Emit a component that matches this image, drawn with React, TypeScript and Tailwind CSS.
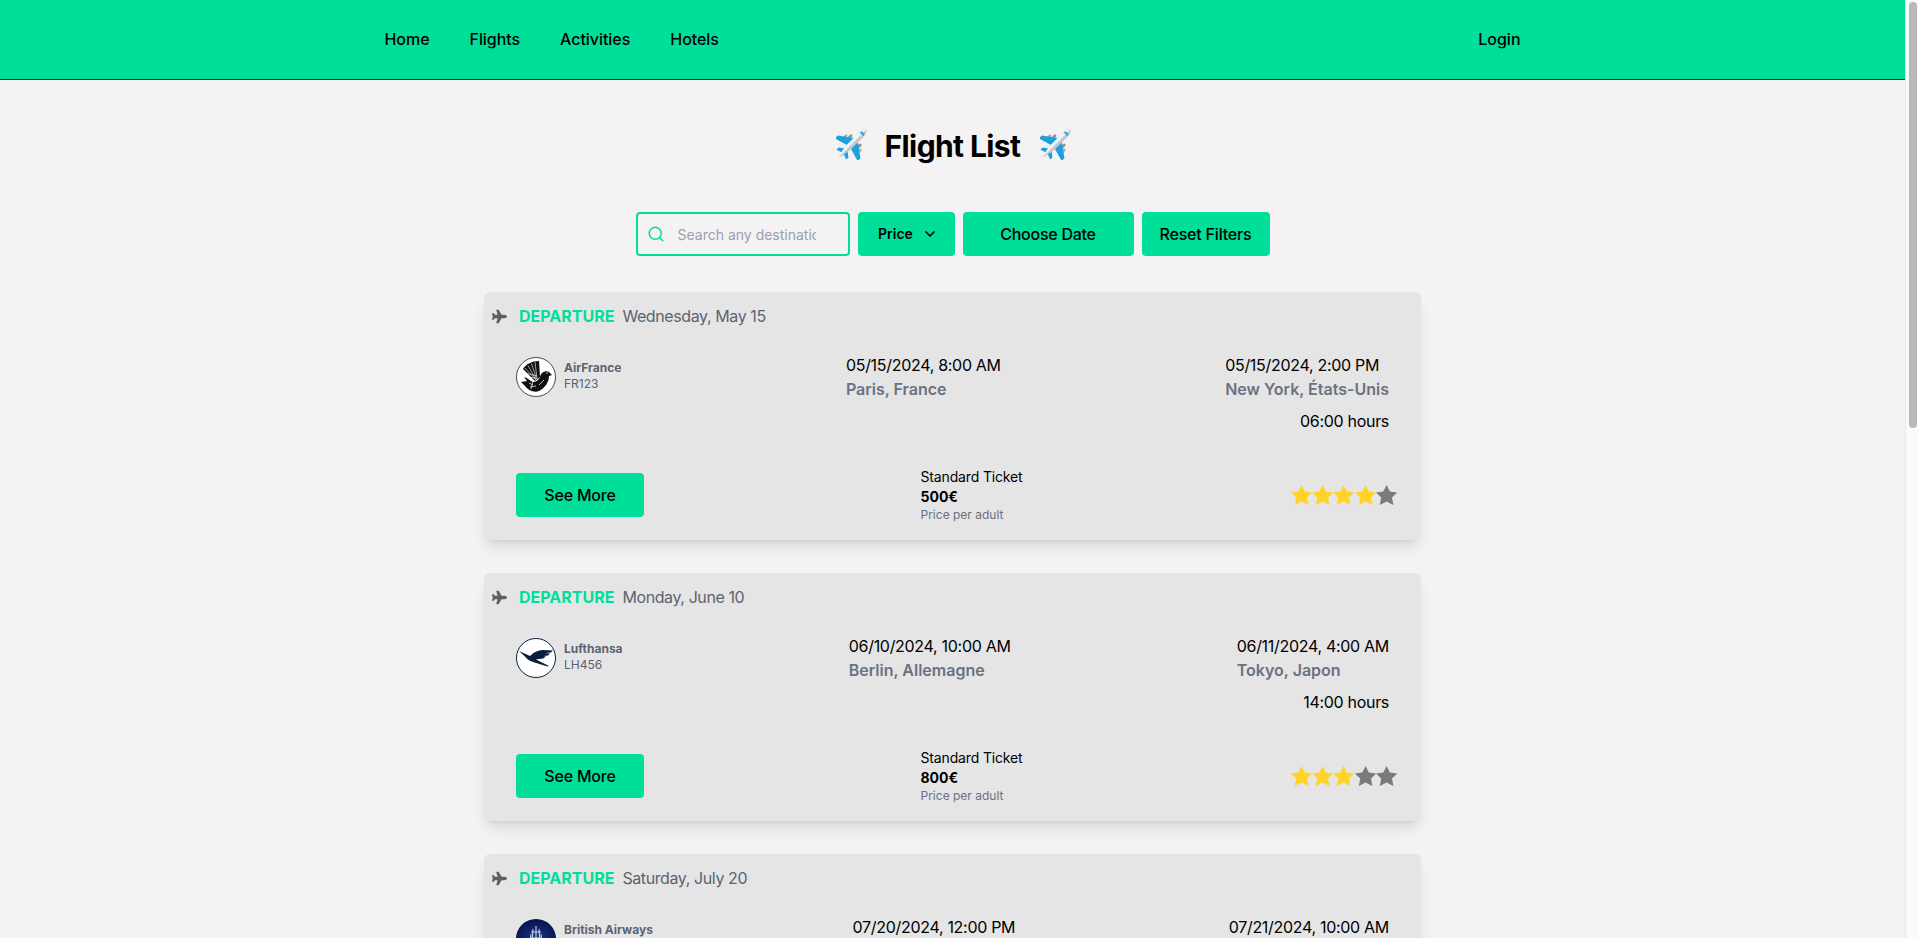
import { FaPlane } from "react-icons/fa";
import { ChevronDown, Search } from "lucide-react";

type Flight = {
  date: string,
  airline: string,
  code: string,
  logo: "af" | "lh" | "ba",
  depTime: string,
  depCity: string,
  arrTime: string,
  arrCity: string,
  duration: string,
  price: string,
  stars: number,
}

const flights: Flight[] = [
  { date: "Wednesday, May 15", airline: "AirFrance", code: "FR123", logo: "af", depTime: "05/15/2024, 8:00 AM", depCity: "Paris, France", arrTime: "05/15/2024, 2:00 PM", arrCity: "New York, États-Unis", duration: "06:00 hours", price: "500€", stars: 4 },
  { date: "Monday, June 10", airline: "Lufthansa", code: "LH456", logo: "lh", depTime: "06/10/2024, 10:00 AM", depCity: "Berlin, Allemagne", arrTime: "06/11/2024, 4:00 AM", arrCity: "Tokyo, Japon", duration: "14:00 hours", price: "800€", stars: 3 },
  { date: "Saturday, July 20", airline: "British Airways", code: "BA789", logo: "ba", depTime: "07/20/2024, 12:00 PM", depCity: "Londres, Royaume-Uni", arrTime: "07/21/2024, 10:00 AM", arrCity: "Sydney, Australie", duration: "22:00 hours", price: "1200€", stars: 5 },
]

const PlaneEmoji = ({ className }: { className: string }) => (
  <svg width="32" height="32" viewBox="0 0 32 32" className={className}>
    <g transform="rotate(45 16 16)">
      <rect x="8" y="9.5" width="3" height="6" rx="1.4" fill="#8d9499" />
      <rect x="21" y="9.5" width="3" height="6" rx="1.4" fill="#8d9499" />
      <rect x="4.6" y="13" width="2.6" height="5" rx="1.2" fill="#a5abaf" />
      <rect x="24.8" y="13" width="2.6" height="5" rx="1.2" fill="#a5abaf" />
      <path d="M14 10 L0 20 L0 24 L14 20 Z" fill="#1f9fdc" />
      <path d="M18 10 L32 20 L32 24 L18 20 Z" fill="#1f9fdc" />
      <path d="M14.5 24 L9 28 L9 31 L15 29 Z" fill="#1f9fdc" />
      <path d="M17.5 24 L23 28 L23 31 L17 29 Z" fill="#1f9fdc" />
      <path d="M16 -4 C18.4 -4 19 1 19 4 L19 22 L16.8 34 L15.2 34 L13 22 L13 4 C13 1 13.6 -4 16 -4 Z" fill="#c4c8cb" />
      <path d="M16 -4 C13.6 -4 13 1 13 4 L13 22 L15.2 34 L16 34 Z" fill="#f3f4f5" />
      <path d="M13.8 0 L18.2 0 L18.6 2.5 L13.4 2.5 Z" fill="#37a6df" />
    </g>
  </svg>
)

const AirlineLogo = ({ logo }: { logo: Flight["logo"] }) => {
  if (logo === "af") {
    return (
      <svg width="40" height="40" viewBox="0 0 40 40" className="shrink-0">
        <circle cx="20" cy="20" r="19.5" fill="#fff" stroke="#4a4a4a" strokeWidth="1" />
        <path d="M7 12 C10 7 16 4 23 4 L24 20 L19 24 Z" fill="#111" />
        <path d="M20 23 L9 11 M20 23 L12 8.5 M20.5 22 L15.5 6.5 M21 22 L19 5 M9 16 L21 19 M11 20 L20 21" stroke="#fff" strokeWidth="0.6" />
        <path d="M24 20 C25 15 30 13 33 15 L36 18 L33 19 C33 25 29 31 23 34 C18 36 12 33 9 29 L5 25 L11 24 L8 20 C12 21 14 24 17 25 C20 25 23 23 24 20 Z" fill="#111" />
        <path d="M13 26 L17 28 M14 30 L20 29 M23 28 L28 23 M17 24 L15 32" stroke="#fff" strokeWidth="0.7" />
        <circle cx="31" cy="16" r="0.7" fill="#fff" />
      </svg>
    )
  }
  if (logo === "lh") {
    return (
      <svg width="40" height="40" viewBox="0 0 40 40" className="shrink-0">
        <circle cx="20" cy="20" r="19.5" fill="#fff" stroke="#0a1d3f" strokeWidth="1" />
        <path d="M3 13 L14 18 C17 15 21 12.5 26 12 L37 12.5 L35 14.5 L29 15 L34 15.5 L32 17.5 L27.5 18 L30 18.5 L27 20.5 C24 21 21.5 21 20 21.5 L33 28 L31.5 28.5 L17 24 C13 23 11 21 9 18.5 Z" fill="#0a1d3f" />
      </svg>
    )
  }
  return (
    <svg width="40" height="40" viewBox="0 0 40 40" className="shrink-0">
      <defs>
        <radialGradient id="ba-glow" cx="50%" cy="55%" r="55%">
          <stop offset="0%" stopColor="#1c3a8c" />
          <stop offset="100%" stopColor="#081450" />
        </radialGradient>
      </defs>
      <circle cx="20" cy="20" r="20" fill="url(#ba-glow)" />
      <path d="M20 7 L20 24 M17 10 L16 24 M23 10 L24 24 M15 15 L14 24 M25 15 L26 24 M14 19 L26 19 M15 13 L25 13" stroke="#c9d3ee" strokeWidth="1.1" fill="none" />
    </svg>
  )
}

const Star = ({ on }: { on: boolean }) => (
  <svg width="21.2" height="20" viewBox="0 0 21.2 20" className={on ? "shrink-0 text-[#ffd42a]" : "shrink-0 text-[#7a7a7a]"}>
    <polygon points="10.6,0 13.9,6.6 21.2,7.5 16,12.6 17.4,20 10.6,16.6 3.8,20 5.2,12.6 0,7.5 7.3,6.6" fill="currentColor" />
  </svg>
)

const FlightCard = ({ flight }: { flight: Flight }) => (
  <div className="h-[248px] shrink-0 rounded-md bg-[#e5e5e5] shadow-lg">
    <div className="flex items-center pl-2 pt-3">
      <FaPlane className="text-[15px] text-[#5f5f5f]" />
      <span className="ml-3 font-bold text-[#00df9a]">DEPARTURE</span>
      <span className="ml-2 tracking-[-0.4px] text-[#5c6370]">{flight.date}</span>
    </div>
    <div className="mt-[25px] flex items-start justify-between px-8">
      <div className="mt-[4px] flex items-center gap-2">
        <AirlineLogo logo={flight.logo} />
        <div className="-mt-[2px] text-xs text-[#5c6370]">
          <div className="font-bold">{flight.airline}</div>
          <div>{flight.code}</div>
        </div>
      </div>
      <div>
        <div className="tracking-[-0.3px] text-black">{flight.depTime}</div>
        <div className="font-semibold text-gray-500">{flight.depCity}</div>
      </div>
      <div>
        <div className="tracking-[-0.3px] text-black">{flight.arrTime}</div>
        <div className="font-semibold text-gray-500">{flight.arrCity}</div>
        <div className="mt-2 text-right tracking-[-0.3px] text-black">{flight.duration}</div>
      </div>
    </div>
    <div className="mt-[34px] flex items-center justify-between pl-8 pr-[24px]">
      <button className="h-11 w-32 rounded-[4px] bg-[#00df9a] font-medium tracking-[-0.2px] text-black">See More</button>
      <div className="ml-2">
        <div className="text-sm tracking-[-0.15px] text-black">Standard Ticket</div>
        <div className="text-sm font-bold text-black">{flight.price}</div>
        <div className="text-xs text-gray-500">Price per adult</div>
      </div>
      <div className="flex">
        {[1, 2, 3, 4, 5].map((n) => (
          <Star key={n} on={n <= flight.stars} />
        ))}
      </div>
    </div>
  </div>
)

export default function App() {
  return (
    <div className="flex h-screen overflow-hidden bg-[#f4f2f3] font-[Inter,sans-serif] text-black">
      <div className="min-w-0 flex-1 overflow-hidden">
        <nav className="h-20 border-b border-gray-800 bg-[#00df9a]">
          <div className="mx-auto flex h-full max-w-6xl items-center justify-between px-2 pb-[2px]">
            <div className="flex gap-10 font-medium tracking-[-0.05px]">
              <a>Home</a>
              <a>Flights</a>
              <a>Activities</a>
              <a>Hotels</a>
            </div>
            <a className="font-medium">Login</a>
          </div>
        </nav>
        <main className="mx-auto flex w-[937px] flex-col">
          <div className="mt-12 flex h-9 items-center justify-center gap-[18px]">
            <PlaneEmoji className="-mt-[5px] shrink-0 translate-x-[1px]" />
            <h1 className="text-3xl font-bold tracking-[-0.6px]">Flight List</h1>
            <PlaneEmoji className="-mt-[5px] shrink-0 translate-x-[2px]" />
          </div>
          <div className="mt-12 flex justify-center gap-2">
            <div className="relative w-[214px]">
              <Search size={18} strokeWidth={2} className="absolute left-[11px] top-[13px] text-[#00df9a]" />
              <input placeholder="Search any destination" className="h-11 w-full rounded-[4px] border-2 border-[#00df9a] bg-transparent pl-10 pr-8 text-sm placeholder:text-gray-400" />
            </div>
            <button className="flex h-11 w-[97px] items-center justify-center gap-[9px] rounded-[4px] bg-[#00df9a] pl-1 text-sm font-semibold">
              Price
              <ChevronDown size={16} strokeWidth={2.5} />
            </button>
            <button className="h-11 w-[171px] rounded-[4px] bg-[#00df9a] font-medium tracking-[-0.25px]">Choose Date</button>
            <button className="h-11 w-32 rounded-[4px] bg-[#00df9a] font-medium tracking-[-0.2px]">Reset Filters</button>
          </div>
          <div className="mt-[36px] flex flex-col gap-[33px]">
            {flights.map((flight) => (
              <FlightCard key={flight.code} flight={flight} />
            ))}
          </div>
        </main>
      </div>
      <div className="w-[13px] shrink-0 border-l border-[#e8e8e8] bg-[#fafafa] pl-[3px] pt-[2px]">
        <div className="h-[426px] w-[8px] rounded-full bg-[#b9b9b9]" />
      </div>
    </div>
  )
}
